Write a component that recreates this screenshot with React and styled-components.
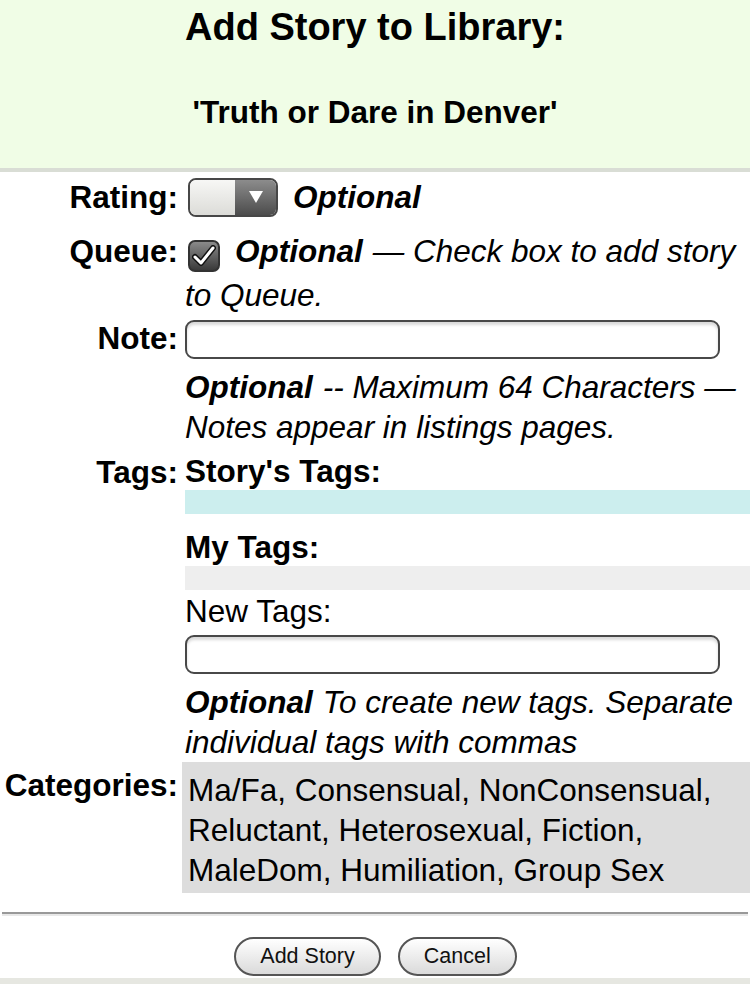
import React from "react";
import styled, { createGlobalStyle } from "styled-components";

const GlobalStyle = createGlobalStyle`
  html, body {
    margin: 0;
    padding: 0;
    background: #ffffff;
  }
  body {
    font-family: "Liberation Sans", Arial, Helvetica, sans-serif;
    color: #000;
  }
`;

const Page = styled.div`
  width: 750px;
  overflow: hidden;
`;

const Header = styled.header`
  background: #f0fde6;
  padding: 5px 0 36px;
  text-align: center;
  border-bottom: 4px solid #d9ddd5;
`;

const Title = styled.h1`
  margin: 0;
  font-size: 38px;
  line-height: 44px;
  font-weight: bold;
`;

const StoryName = styled.h2`
  margin: 43px 0 0;
  font-size: 31.5px;
  line-height: 40px;
  font-weight: bold;
`;

const Row = styled.div`
  display: grid;
  grid-template-columns: 178px 1fr;
  column-gap: 4px;
  margin-top: ${(p) => p.$top || 0}px;
`;

const Label = styled.div`
  font-size: 31.5px;
  font-weight: bold;
  line-height: ${(p) => p.$lh || 40}px;
  text-align: right;
  white-space: nowrap;
  padding-top: ${(p) => p.$pad || 0}px;
`;

const Value = styled.div`
  padding-left: 3px;
  font-size: 31.5px;
  line-height: ${(p) => p.$lh || 40}px;
  min-width: 0;
`;

const Inline = styled.div`
  display: flex;
  align-items: center;
  height: 40px;
  gap: 15px;
`;

const SelectBox = styled.div`
  margin-left: 3px;
  width: 90px;
  height: 39px;
  box-sizing: border-box;
  border: 2px solid #474747;
  border-radius: 8px;
  overflow: hidden;
  display: flex;
`;

const SelectField = styled.div`
  flex: 1;
  background: linear-gradient(#f7f7f5, #dcdcd8);
`;

const SelectArrow = styled.div`
  width: 41px;
  background: linear-gradient(#8c8c8c, #4c4c4c);
  display: flex;
  align-items: center;
  justify-content: center;
`;

const Optional = styled.span`
  font-weight: bold;
  font-style: italic;
  margin-right: ${(p) => (p.$gap ? 10 : 0)}px;
`;

const Help = styled.div`
  font-style: italic;
  margin-top: ${(p) => p.$top || 0}px;
`;

const CheckBox = styled.span`
  display: inline-flex;
  align-items: center;
  justify-content: center;
  vertical-align: -5px;
  margin: 0 15px 0 3px;
  width: 32px;
  height: 32px;
  box-sizing: border-box;
  border: 2px solid #333;
  border-radius: 7px;
  background: linear-gradient(#8a8a8a, #3a3a3a);
`;

const TextInput = styled.input`
  display: block;
  width: 535px;
  height: 39px;
  box-sizing: border-box;
  margin: ${(p) => p.$top || 0}px 0 0;
  border: 2px solid #484848;
  border-radius: 9px;
  background: #fff;
  box-shadow: inset 0 3px 3px rgba(0, 0, 0, 0.15);
  font-size: 20px;
  padding: 0 8px;
  outline: none;
`;

const TagHead = styled.div`
  font-weight: bold;
  line-height: 38px;
  margin-top: ${(p) => p.$top || 0}px;
`;

const TagBar = styled.div`
  height: 24px;
  background: ${(p) => p.$color};
`;

const SubLabel = styled.div`
  line-height: 40px;
  margin-top: 1px;
`;

const Categories = styled.div`
  background: #dddddd;
  padding: 8px 0 3px 6px;
  font-size: 31.5px;
  line-height: 40px;
`;

const Rule = styled.hr`
  margin: 19px 2px 0;
  border: 0;
  border-top: 2px solid #999;
  border-bottom: 2px solid #e8e8e8;
  height: 0;
`;

const Buttons = styled.div`
  display: flex;
  justify-content: center;
  gap: 17px;
  margin-top: 21px;
  padding-left: 1px;
`;

const Button = styled.button`
  height: 39px;
  padding: 0 24px;
  border: 2px solid #555;
  border-radius: 20px;
  background: linear-gradient(#ffffff, #dadada);
  font-family: "Liberation Sans", Arial, sans-serif;
  font-size: 21.5px;
  color: #111;
`;

const Footer = styled.div`
  margin-top: 2px;
  height: 40px;
  background: #e6e7e1;
`;

const App = () => {
  return (
    <Page>
      <GlobalStyle />
      <Header>
        <Title>Add Story to Library:</Title>
        <StoryName>'Truth or Dare in Denver'</StoryName>
      </Header>

      <Row $top={5}>
        <Label>Rating:</Label>
        <Value>
          <Inline>
            <SelectBox>
              <SelectField />
              <SelectArrow>
                <svg width="14" height="12" viewBox="0 0 14 12">
                  <polygon points="0,0 14,0 7,12" fill="#fff" />
                </svg>
              </SelectArrow>
            </SelectBox>
            <Optional>Optional</Optional>
          </Inline>
        </Value>
      </Row>

      <Row $top={12}>
        <Label $lh={44}>Queue:</Label>
        <Value $lh={44}>
          <CheckBox>
            <svg width="24" height="22" viewBox="0 0 24 22">
              <path
                d="M3 12 L9 18 L21 3"
                fill="none"
                stroke="#111"
                strokeWidth="6"
                strokeLinecap="round"
                strokeLinejoin="round"
              />
              <path
                d="M3 12 L9 18 L21 3"
                fill="none"
                stroke="#fff"
                strokeWidth="3"
                strokeLinecap="round"
                strokeLinejoin="round"
              />
            </svg>
          </CheckBox>
          <Optional $gap>Optional</Optional>
          <i>— Check box to add story to Queue.</i>
        </Value>
      </Row>

      <Row $top={1}>
        <Label>Note:</Label>
        <Value>
          <TextInput type="text" $top={2} />
          <Help $top={8}>
            <Optional $gap>Optional</Optional>-- Maximum 64 Characters —
            Notes appear in listings pages.
          </Help>
        </Value>
      </Row>

      <Row $top={5}>
        <Label>Tags:</Label>
        <Value>
          <TagHead>Story's Tags:</TagHead>
          <TagBar $color="#cceeee" />
          <TagHead $top={14}>My Tags:</TagHead>
          <TagBar $color="#eeeeee" />
          <SubLabel>New Tags:</SubLabel>
          <TextInput type="text" $top={4} />
          <Help $top={8}>
            <Optional $gap>Optional</Optional>To create new tags. Separate
            individual tags with commas
          </Help>
        </Value>
      </Row>

      <Row>
        <Label $pad={3}>Categories:</Label>
        <Categories>
          Ma/Fa, Consensual, NonConsensual, Reluctant, Heterosexual, Fiction,
          MaleDom, Humiliation, Group Sex
        </Categories>
      </Row>

      <Rule />

      <Buttons>
        <Button>Add Story</Button>
        <Button>Cancel</Button>
      </Buttons>

      <Footer />
    </Page>
  );
};

export default App;
